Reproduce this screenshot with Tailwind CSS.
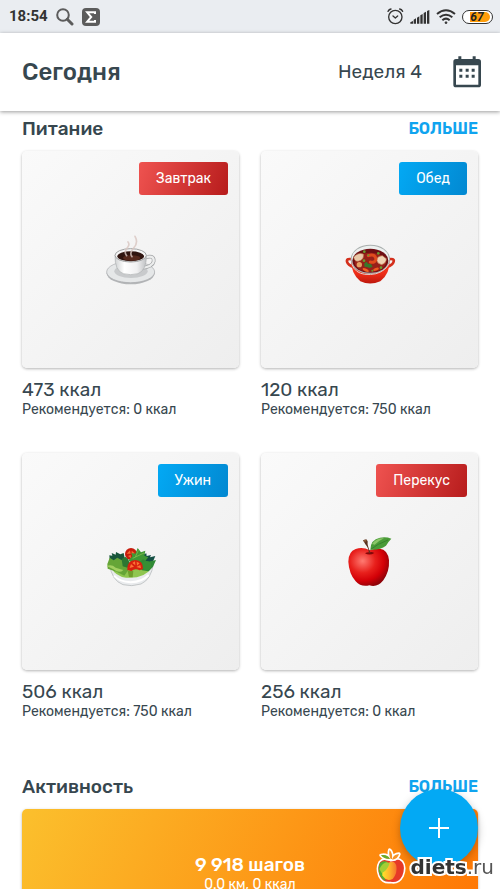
<!DOCTYPE html>
<html lang="ru">
  <head>
    <meta charset="UTF-8" />
    <meta name="viewport" content="width=device-width, initial-scale=1.0" />
    <script src="https://cdn.jsdelivr.net/npm/@tailwindcss/browser@4"></script>
    <title>Сегодня</title>
  </head>
  <body class="flex h-screen flex-col overflow-hidden bg-white font-['Rubik','Roboto',sans-serif] text-[#37474f]">
    <!-- Status bar -->
    <div class="flex h-[33px] shrink-0 items-center bg-[#eaedf1] pr-[7px] pl-[9px] font-['Roboto',sans-serif] text-[#333]">
      <span class="text-[15px] font-bold">18:54</span>
      <svg class="ml-2 h-[18px] w-[18px]" viewBox="0 0 18 18" fill="none" stroke="#5c5c5c" stroke-width="2">
        <circle cx="7" cy="7" r="5.8" />
        <path d="M11.3 11.3L16 16" stroke-width="3" stroke-linecap="round" />
      </svg>
      <svg class="ml-2 h-[18px] w-[18px]" viewBox="0 0 18 18">
        <rect width="18" height="18" rx="4" fill="#5c5c5c" />
        <path d="M13 6V4.300H5.200L9.200 9L5.200 13.700H13V12" fill="none" stroke="#fff" stroke-width="2" />
      </svg>
      <div class="ml-auto flex items-center gap-[6px]">
        <svg class="h-[17px] w-[17px]" viewBox="411 25 51 51" fill="none" stroke="#333" stroke-width="4" stroke-linecap="round" stroke-linejoin="round">
          <circle cx="436" cy="52" r="20" />
          <path d="M429 49L436 55L443 49M414 35Q417 29 423 28M458 35Q455 29 449 28" />
        </svg>
        <svg class="h-[14px] w-[20px]" viewBox="478 29 60 42" fill="#333">
          <path d="M479 70V66L487 62V70zM489 70V58L496 54V70zM499 70V52L506 48V70zM509 70V45L516 41V70zM519 70V38L526 34V70zM529 70V32L536 29V70z" />
        </svg>
        <svg class="h-[15px] w-[20px]" viewBox="556 27 60 45" fill="none" stroke="#333" stroke-width="6">
          <path d="M559 42Q586 20 613 42M567 52Q586 36 605 52M575 61Q586 51 597 61" />
          <circle cx="586" cy="68" r="3" fill="#333" stroke-width="2" />
        </svg>
        <div class="flex h-[14px] w-[31px] items-center rounded-full border border-[#333] bg-white p-px">
          <span class="flex h-full w-[26px] items-center justify-center rounded-full bg-linear-to-r from-white from-25% to-[#ff9d0a] to-25% text-[12px] font-bold text-[#222] italic">67</span>
        </div>
      </div>
    </div>

    <!-- App bar -->
    <header class="relative z-10 flex h-[78px] shrink-0 items-center bg-white pr-[18px] pl-[22px] shadow-[0_1px_4px_rgba(0,0,0,0.4)]">
      <h1 class="text-[24px] font-medium">Сегодня</h1>
      <span class="mr-[30px] ml-auto text-[19px]">Неделя 4</span>
      <button class="h-[32px] w-[30px]" type="button" aria-label="Календарь">
        <svg class="h-[32px] w-[30px]" viewBox="605 169 90 96" fill="#37474f">
          <path fill-rule="evenodd" d="M624 170h9v8h34v-8h9v8h8q8 0 8 8v69q0 8-8 8h-67q-8 0-8-8v-69q0-8 8-8h7zM617 197v58h67v-58z" />
          <path d="M627 207h9v9h-9zM646 207h9v9h-9zM664 207h9v9h-9zM627 225h9v9h-9zM646 225h9v9h-9zM664 225h9v9h-9z" />
        </svg>
      </button>
    </header>

    <main class="min-h-0 flex-1 overflow-y-auto px-[22px] pt-[6px] [scrollbar-width:none]">
      <section>
        <div class="mb-[10px] flex h-6 items-center justify-between">
          <h2 class="text-[19px] font-medium">Питание</h2>
          <a href="#" class="text-[16px] font-semibold text-[#10a4ef]">БОЛЬШЕ</a>
        </div>

        <div class="grid grid-cols-2 gap-x-[22px] gap-y-[33px]">
          <article>
            <div class="relative flex aspect-square items-center justify-center rounded-[5px] bg-linear-to-br from-[#fafafa] to-[#eeeeee] shadow-[0_1px_3px_rgba(0,0,0,0.3)]">
              <button type="button" class="absolute top-[11px] right-[11px] h-[33px] rounded-[3px] bg-linear-[110deg] from-[#ef5350] to-[#b71c1c] px-[17px] text-[14px] text-white">Завтрак</button>
              <svg class="h-[60px] w-[60px]" viewBox="17 14 180 180">
                <defs>
                  <linearGradient id="cup" x1="0" x2="1">
                    <stop offset="0" stop-color="#d0d2d3" />
                    <stop offset=".3" stop-color="#fff" />
                    <stop offset=".7" stop-color="#f0f0f1" />
                    <stop offset="1" stop-color="#bfc1c3" />
                  </linearGradient>
                </defs>
                <ellipse cx="106" cy="144" rx="72" ry="33" fill="#b4b6b8" />
                <ellipse cx="106" cy="140" rx="72" ry="32" fill="#e5e7e8" stroke="#a9abad" stroke-width="2" />
                <ellipse cx="107" cy="138" rx="50" ry="20" fill="#c8cacc" />
                <path d="M145 98Q177 86 175 108Q172 125 136 128" fill="none" stroke="#a0a2a4" stroke-width="11" />
                <path d="M145 98Q177 86 175 108Q172 125 136 128" fill="none" stroke="#eceded" stroke-width="7" />
                <path d="M59 90Q58 136 84 145Q106 151 128 145Q154 135 153 90z" fill="url(#cup)" stroke="#adb0b2" stroke-width="2" />
                <ellipse cx="106" cy="90" rx="47" ry="20" fill="#f5f5f5" stroke="#a1a3a4" stroke-width="3" />
                <ellipse cx="106" cy="93" rx="40" ry="15" fill="#301510" />
                <ellipse cx="109" cy="98" rx="26" ry="8" fill="#56291d" />
                <path d="M94 91Q84 79 97 66Q104 57 98 50M110 94Q101 83 115 68Q130 52 119 33" fill="none" stroke="#d8c5c1" stroke-opacity=".8" stroke-width="5" stroke-linecap="round" />
              </svg>
            </div>
            <p class="mt-3 text-[19px] leading-5">473 ккал</p>
            <p class="text-[14px] leading-5">Рекомендуется: 0 ккал</p>
          </article>

          <article>
            <div class="relative flex aspect-square items-center justify-center rounded-[5px] bg-linear-to-br from-[#fafafa] to-[#eeeeee] shadow-[0_1px_3px_rgba(0,0,0,0.3)]">
              <button type="button" class="absolute top-[11px] right-[11px] h-[33px] rounded-[3px] bg-linear-[110deg] from-[#03a9f4] to-[#0288d1] px-[17px] text-[14px] text-white">Обед</button>
              <svg class="h-[60px] w-[60px]" viewBox="14 -1 180 180">
                <defs>
                  <linearGradient id="pot" x1="0" y1="0" x2="0" y2="1">
                    <stop offset="0" stop-color="#ff492c" />
                    <stop offset=".6" stop-color="#ed2d18" />
                    <stop offset="1" stop-color="#bd170c" />
                  </linearGradient>
                </defs>
                <path d="M52 87Q33 83 35 94Q38 105 55 110M158 87Q178 83 175 94Q172 105 154 110" fill="none" stroke="#d4301d" stroke-width="8" />
                <path d="M47 85Q46 128 75 153Q104 166 135 153Q165 129 163 85z" fill="url(#pot)" />
                <ellipse cx="105" cy="87" rx="59" ry="44" fill="#a9afae" />
                <ellipse cx="105" cy="86" rx="56" ry="40" fill="#edf0ef" />
                <ellipse cx="105" cy="91" rx="54" ry="36" fill="#6e0e13" />
                <ellipse cx="105" cy="96" rx="47" ry="29" fill="#98201a" />
                <path d="M55 81Q67 65 84 71Q87 89 68 93Q58 94 55 81z" fill="#e9c9a9" stroke="#bc7650" stroke-width="2" />
                <path d="M124 89Q124 78 141 76L153 85Q153 98 139 103Q126 101 124 89z" fill="#f0d3b4" stroke="#bc7650" stroke-width="2" />
                <path d="M99 76Q119 69 122 86Q119 99 105 95" fill="none" stroke="#df4b1d" stroke-width="9" stroke-linecap="round" />
                <circle cx="72" cy="103" r="8" fill="#e6a063" />
                <ellipse cx="91" cy="119" rx="10" ry="4" fill="#ef6424" transform="rotate(25 91 119)" />
                <ellipse cx="122" cy="117" rx="9" ry="4" fill="#ed5b20" transform="rotate(-20 122 117)" />
                <path d="M87 99l7-5 4 6 9 1 5 8-9 4-9-3-7-1z" fill="#38772a" />
                <g fill="#6a9b31">
                  <circle cx="87" cy="64" r="4" />
                  <circle cx="99" cy="75" r="3" />
                  <circle cx="129" cy="69" r="4" />
                  <circle cx="86" cy="91" r="4" />
                  <circle cx="137" cy="112" r="4" />
                  <circle cx="111" cy="121" r="3" />
                </g>
                <path d="M50 103Q60 128 88 132Q125 136 148 117Q157 109 160 101" fill="none" stroke="#e3c9c4" stroke-width="3" />
              </svg>
            </div>
            <p class="mt-3 text-[19px] leading-5">120 ккал</p>
            <p class="text-[14px] leading-5">Рекомендуется: 750 ккал</p>
          </article>

          <article>
            <div class="relative flex aspect-square items-center justify-center rounded-[5px] bg-linear-to-br from-[#fafafa] to-[#eeeeee] shadow-[0_1px_3px_rgba(0,0,0,0.3)]">
              <button type="button" class="absolute top-[11px] right-[11px] h-[33px] rounded-[3px] bg-linear-[110deg] from-[#03a9f4] to-[#0288d1] px-[17px] text-[14px] text-white">Ужин</button>
              <svg class="h-[60px] w-[60px]" viewBox="17 5 180 180">
                <path d="M43 101Q48 150 83 163Q109 170 137 161Q168 147 174 100z" fill="#e9ebed" stroke="#aeb2b4" stroke-width="2" />
                <path d="M48 112Q60 137 92 142Q147 146 169 112L163 99H45z" fill="#8fc650" />
                <path d="M42 75L51 76 49 68 61 73 62 65 75 72 85 68 91 99 64 108 44 99z" fill="#18563b" />
                <path d="M139 75l14-6 1 8 13-3-3 7 16-4-9 21-30 3z" fill="#155044" />
                <path d="M36 101l7-19 12 8 11-8 22 12 13 22-14 20-22-11-28-10z" fill="#65a537" />
                <path d="M34 107Q49 101 61 112L84 119Q73 131 54 117z" fill="#a2cf61" />
                <circle cx="107" cy="71" r="18" fill="#c81c0d" />
                <path d="M94 70l10-10 2 10zM109 61l10 8-10 3zM98 77l8-3 1 10z" fill="#f36a31" />
                <path d="M99 91l12-13-3-10 12 2 7-17 10 13 13-5-3 15 12 5-14 16-28 3z" fill="#3f9835" />
                <path d="M112 84L146 68M120 80L129 60" stroke="#77b64b" stroke-width="3" />
                <path d="M79 86l11-7 8 8 7 13-9 12-14-4z" fill="#2c7732" />
                <path d="M125 101l18-14 15 7 24-5-9 20-13 14-20-3z" fill="#2f8a35" />
                <circle cx="154" cy="106" r="14" fill="#368f34" />
                <path d="M97 121h17l-2 20-11-1z" fill="#6f9e2c" />
                <path d="M96 119Q94 91 120 89Q144 91 143 116L133 120Q119 112 108 122z" fill="#d7200e" />
                <path d="M103 113l4-12 9 8zM111 98l8-5 1 12zM124 94l9 5-8 7zM123 110l12-6 2 10z" fill="#fb7535" />
                <path d="M56 136Q72 154 106 156Q142 154 160 134" fill="none" stroke="#fff" stroke-width="6" />
              </svg>
            </div>
            <p class="mt-3 text-[19px] leading-5">506 ккал</p>
            <p class="text-[14px] leading-5">Рекомендуется: 750 ккал</p>
          </article>

          <article>
            <div class="relative flex aspect-square items-center justify-center rounded-[5px] bg-linear-to-br from-[#fafafa] to-[#eeeeee] shadow-[0_1px_3px_rgba(0,0,0,0.3)]">
              <button type="button" class="absolute top-[11px] right-[11px] h-[33px] rounded-[3px] bg-linear-[110deg] from-[#ef5350] to-[#b71c1c] px-[17px] text-[14px] text-white">Перекус</button>
              <svg class="h-[60px] w-[60px]" viewBox="14 20 180 180">
                <defs>
                  <radialGradient id="apple" cx=".35" cy=".34" r=".7">
                    <stop offset="0" stop-color="#ff7b72" />
                    <stop offset=".45" stop-color="#e8201c" />
                    <stop offset=".75" stop-color="#d30007" />
                    <stop offset="1" stop-color="#8e0309" />
                  </radialGradient>
                </defs>
                <path d="M103 75Q83 64 61 71Q39 79 39 109Q41 145 61 168Q77 186 102 180Q127 187 144 165Q163 138 161 105Q158 73 133 70Q118 69 103 75z" fill="url(#apple)" />
                <path d="M89 84Q103 92 117 83Q110 79 103 81Q96 79 89 84z" fill="#840608" />
                <path d="M83 45L93 42L97 48Q95 61 106 83H101Q99 66 90 57z" fill="#5b3220" />
                <ellipse cx="89" cy="46" rx="5" ry="3" fill="#8a5a3a" />
                <path d="M105 73Q105 43 134 37Q153 34 168 40Q159 49 152 61Q134 75 105 73z" fill="#4a9b38" />
                <path d="M110 56Q122 38 146 39Q133 45 118 58z" fill="#8bc668" />
                <path d="M106 72Q126 56 158 44" fill="none" stroke="#2e7427" stroke-width="2" />
              </svg>
            </div>
            <p class="mt-3 text-[19px] leading-5">256 ккал</p>
            <p class="text-[14px] leading-5">Рекомендуется: 0 ккал</p>
          </article>
        </div>
      </section>

      <section class="mt-[53px]">
        <div class="mb-[10px] flex h-6 items-center justify-between">
          <h2 class="text-[19px] font-medium">Активность</h2>
          <a href="#" class="text-[16px] font-semibold text-[#10a4ef]">БОЛЬШЕ</a>
        </div>
        <div class="flex h-[217px] flex-col items-center rounded-[5px] bg-linear-[115deg] from-[#fbc02d] to-[#ff6f00] pt-11 text-white shadow-[0_1px_3px_rgba(0,0,0,0.3)]">
          <p class="text-[19px] leading-6 font-medium">9 918 шагов</p>
          <p class="text-[14px] leading-4">0.0 км, 0 ккал</p>
        </div>
      </section>
    </main>

    <!-- Add button -->
    <button type="button" aria-label="Добавить" class="fixed right-[22px] bottom-[22px] z-20 flex size-[78px] items-center justify-center rounded-full bg-[#03a9f4] shadow-[0_3px_8px_rgba(0,0,0,0.25)]">
      <svg class="size-5" viewBox="0 0 20 20" stroke="#fff" stroke-width="2">
        <path d="M10 0V20M0 10H20" />
      </svg>
    </button>

    <!-- Site mark -->
    <div class="fixed right-[6px] bottom-[4px] z-30 flex items-center gap-[6px]">
      <svg class="h-[36px] w-[28px] overflow-visible" viewBox="50 232 84 108">
        <defs>
          <linearGradient id="mark" x1="0" y1="0" x2="1" y2="0">
            <stop offset="0" stop-color="#ffe62b" />
            <stop offset=".5" stop-color="#ffb52c" />
            <stop offset="1" stop-color="#f5742d" />
          </linearGradient>
        </defs>
        <g stroke="#fff" stroke-width="10" stroke-linejoin="round" paint-order="stroke">
          <path d="M92 270Q72 257 59 272Q49 289 58 312Q69 334 91 330Q114 335 126 312Q136 286 125 271Q111 257 92 270z" fill="#e63927" />
          <path d="M91 262Q84 247 88 235Q97 244 95 262zM86 262Q72 262 62 251Q79 247 89 261zM96 261Q101 248 116 247Q112 262 96 264z" fill="#f79428" />
        </g>
        <path d="M81 270Q61 265 56 281Q52 298 60 313Q65 325 77 328Q60 302 81 270z" fill="#52ae32" />
        <path d="M88 272Q103 265 108 282Q112 304 97 322Q77 331 66 311Q60 287 88 272z" fill="url(#mark)" />
        <path d="M57 292Q72 264 88 275Q80 298 64 304z" fill="#a3ce35" />
        <path d="M62 251Q79 247 89 261Q72 263 62 251z" fill="#65ad31" />
      </svg>
      <span class="font-['DejaVu_Sans',sans-serif] text-[20px] leading-6 text-[#555] [-webkit-text-stroke:4px_white] [paint-order:stroke_fill]"><b class="text-[#333]">diets</b>.ru</span>
    </div>
  </body>
</html>
